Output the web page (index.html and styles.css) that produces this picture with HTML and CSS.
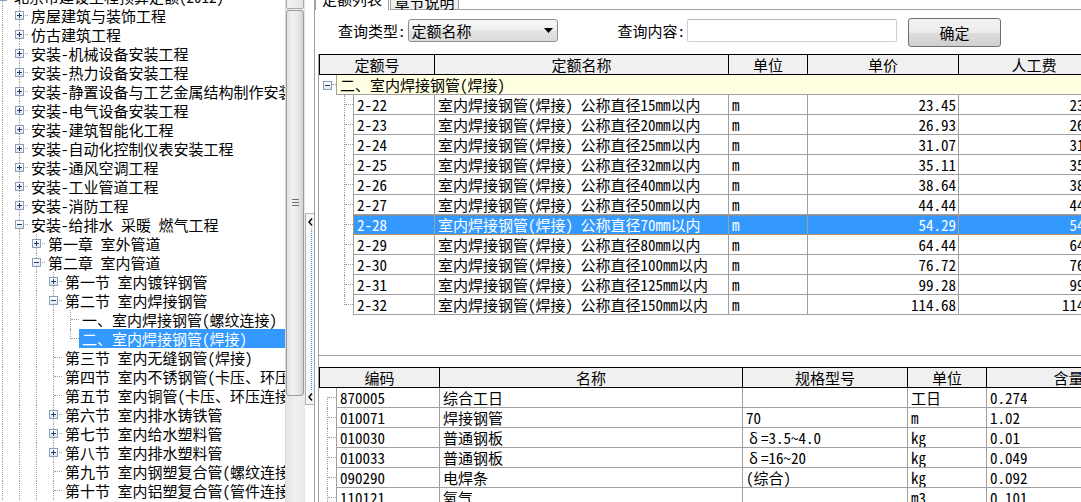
FILE: index.html
```html
<!DOCTYPE html>
<html lang="zh-CN">
<head>
<meta charset="utf-8">
<title>定额列表</title>
<link rel="stylesheet" href="styles.css">
</head>
<body>
<div class="app">
  <div class="left">
    <div class="tree">
      <div class="tree-inner">
        <div class="trow"><span class="c"><span class="box"></span></span><span class="t">北京市建设工程预算定额(2012)</span></div>
        <div class="trow"><span class="g v"></span><span class="c"><span class="box plus"></span></span><span class="t">房屋建筑与装饰工程</span></div>
        <div class="trow"><span class="g v"></span><span class="c"><span class="box plus"></span></span><span class="t">仿古建筑工程</span></div>
        <div class="trow"><span class="g v"></span><span class="c"><span class="box plus"></span></span><span class="t">安装-机械设备安装工程</span></div>
        <div class="trow"><span class="g v"></span><span class="c"><span class="box plus"></span></span><span class="t">安装-热力设备安装工程</span></div>
        <div class="trow"><span class="g v"></span><span class="c"><span class="box plus"></span></span><span class="t">安装-静置设备与工艺金属结构制作安装工程</span></div>
        <div class="trow"><span class="g v"></span><span class="c"><span class="box plus"></span></span><span class="t">安装-电气设备安装工程</span></div>
        <div class="trow"><span class="g v"></span><span class="c"><span class="box plus"></span></span><span class="t">安装-建筑智能化工程</span></div>
        <div class="trow"><span class="g v"></span><span class="c"><span class="box plus"></span></span><span class="t">安装-自动化控制仪表安装工程</span></div>
        <div class="trow"><span class="g v"></span><span class="c"><span class="box plus"></span></span><span class="t">安装-通风空调工程</span></div>
        <div class="trow"><span class="g v"></span><span class="c"><span class="box plus"></span></span><span class="t">安装-工业管道工程</span></div>
        <div class="trow"><span class="g v"></span><span class="c"><span class="box plus"></span></span><span class="t">安装-消防工程</span></div>
        <div class="trow"><span class="g v"></span><span class="c"><span class="box"></span></span><span class="t">安装-给排水 采暖 燃气工程</span></div>
        <div class="trow"><span class="g v"></span><span class="g v"></span><span class="c"><span class="box plus"></span></span><span class="t">第一章 室外管道</span></div>
        <div class="trow"><span class="g v"></span><span class="g v"></span><span class="c"><span class="box"></span></span><span class="t">第二章 室内管道</span></div>
        <div class="trow"><span class="g v"></span><span class="g v"></span><span class="g v"></span><span class="c"><span class="box plus"></span></span><span class="t">第一节 室内镀锌钢管</span></div>
        <div class="trow"><span class="g v"></span><span class="g v"></span><span class="g v"></span><span class="c"><span class="box"></span></span><span class="t">第二节 室内焊接钢管</span></div>
        <div class="trow"><span class="g v"></span><span class="g v"></span><span class="g v"></span><span class="g v"></span><span class="c"></span><span class="t">一、室内焊接钢管(螺纹连接)</span></div>
        <div class="trow"><span class="g v"></span><span class="g v"></span><span class="g v"></span><span class="g v"></span><span class="c last"></span><span class="t sel">二、室内焊接钢管(焊接)</span></div>
        <div class="trow"><span class="g v"></span><span class="g v"></span><span class="g v"></span><span class="c"></span><span class="t">第三节 室内无缝钢管(焊接)</span></div>
        <div class="trow"><span class="g v"></span><span class="g v"></span><span class="g v"></span><span class="c"></span><span class="t">第四节 室内不锈钢管(卡压、环压连接)</span></div>
        <div class="trow"><span class="g v"></span><span class="g v"></span><span class="g v"></span><span class="c"></span><span class="t">第五节 室内铜管(卡压、环压连接)</span></div>
        <div class="trow"><span class="g v"></span><span class="g v"></span><span class="g v"></span><span class="c"><span class="box plus"></span></span><span class="t">第六节 室内排水铸铁管</span></div>
        <div class="trow"><span class="g v"></span><span class="g v"></span><span class="g v"></span><span class="c"><span class="box plus"></span></span><span class="t">第七节 室内给水塑料管</span></div>
        <div class="trow"><span class="g v"></span><span class="g v"></span><span class="g v"></span><span class="c"><span class="box plus"></span></span><span class="t">第八节 室内排水塑料管</span></div>
        <div class="trow"><span class="g v"></span><span class="g v"></span><span class="g v"></span><span class="c"></span><span class="t">第九节 室内钢塑复合管(螺纹连接)</span></div>
        <div class="trow"><span class="g v"></span><span class="g v"></span><span class="g v"></span><span class="c"></span><span class="t">第十节 室内铝塑复合管(管件连接)</span></div>
      </div>
    </div>
    <div class="vscroll">
      <div class="sb-up"></div>
      <div class="sb-thumb"><span class="grip"></span></div>
    </div>
  </div>

  <div class="splitter">
    <div class="split-handle">
      <svg class="chev" width="5" height="8" viewBox="0 0 5 8"><path d="M4 0.5 L1 4 L4 7.5" stroke="#000" stroke-width="1.4" fill="none"/></svg>
      <span class="split-dots"></span>
      <svg class="chev" width="5" height="8" viewBox="0 0 5 8"><path d="M4 0.5 L1 4 L4 7.5" stroke="#000" stroke-width="1.4" fill="none"/></svg>
    </div>
  </div>

  <div class="right">
    <div class="tabs">
      <div class="tab active">定额列表</div>
      <div class="tab">章节说明</div>
      <div class="tab-fill"></div>
    </div>

    <div class="query">
      <span class="qlabel">查询类型:</span>
      <div class="select"><span>定额名称</span><svg width="9" height="5" viewBox="0 0 9 5"><path d="M0 0 H9 L4.5 5 Z" fill="#000"/></svg></div>
      <span class="qlabel ql2">查询内容:</span>
      <div class="input"></div>
      <div class="btn">确定</div>
    </div>

    <div class="grids">
      <div class="upper">
        <div class="hrow">
          <div class="hcell uh-code">定额号</div>
          <div class="hcell u-name">定额名称</div>
          <div class="hcell u-unit">单位</div>
          <div class="hcell u-price">单价</div>
          <div class="hcell u-labor">人工费</div>
        </div>
        <div class="grow">
          <span class="gbox"><span class="box"></span></span>
          <div class="gcell">二、室内焊接钢管(焊接)</div>
        </div>
        <div class="drow"><span class="ind"></span><span class="c"></span><div class="cells"><div class="cell u-code">2-22</div><div class="cell u-name">室内焊接钢管(焊接) 公称直径15mm以内</div><div class="cell u-unit">m</div><div class="cell u-price num">23.45</div><div class="cell u-labor num">23.12</div></div></div>
        <div class="drow"><span class="ind"></span><span class="c"></span><div class="cells"><div class="cell u-code">2-23</div><div class="cell u-name">室内焊接钢管(焊接) 公称直径20mm以内</div><div class="cell u-unit">m</div><div class="cell u-price num">26.93</div><div class="cell u-labor num">26.47</div></div></div>
        <div class="drow"><span class="ind"></span><span class="c"></span><div class="cells"><div class="cell u-code">2-24</div><div class="cell u-name">室内焊接钢管(焊接) 公称直径25mm以内</div><div class="cell u-unit">m</div><div class="cell u-price num">31.07</div><div class="cell u-labor num">31.03</div></div></div>
        <div class="drow"><span class="ind"></span><span class="c"></span><div class="cells"><div class="cell u-code">2-25</div><div class="cell u-name">室内焊接钢管(焊接) 公称直径32mm以内</div><div class="cell u-unit">m</div><div class="cell u-price num">35.11</div><div class="cell u-labor num">35.03</div></div></div>
        <div class="drow"><span class="ind"></span><span class="c"></span><div class="cells"><div class="cell u-code">2-26</div><div class="cell u-name">室内焊接钢管(焊接) 公称直径40mm以内</div><div class="cell u-unit">m</div><div class="cell u-price num">38.64</div><div class="cell u-labor num">38.58</div></div></div>
        <div class="drow"><span class="ind"></span><span class="c"></span><div class="cells"><div class="cell u-code">2-27</div><div class="cell u-name">室内焊接钢管(焊接) 公称直径50mm以内</div><div class="cell u-unit">m</div><div class="cell u-price num">44.44</div><div class="cell u-labor num">44.29</div></div></div>
        <div class="drow"><span class="ind"></span><span class="c"></span><div class="cells selrow"><div class="cell u-code">2-28</div><div class="cell u-name">室内焊接钢管(焊接) 公称直径70mm以内</div><div class="cell u-unit">m</div><div class="cell u-price num">54.29</div><div class="cell u-labor num">54.13</div></div></div>
        <div class="drow"><span class="ind"></span><span class="c"></span><div class="cells"><div class="cell u-code">2-29</div><div class="cell u-name">室内焊接钢管(焊接) 公称直径80mm以内</div><div class="cell u-unit">m</div><div class="cell u-price num">64.44</div><div class="cell u-labor num">64.21</div></div></div>
        <div class="drow"><span class="ind"></span><span class="c"></span><div class="cells"><div class="cell u-code">2-30</div><div class="cell u-name">室内焊接钢管(焊接) 公称直径100mm以内</div><div class="cell u-unit">m</div><div class="cell u-price num">76.72</div><div class="cell u-labor num">76.51</div></div></div>
        <div class="drow"><span class="ind"></span><span class="c"></span><div class="cells"><div class="cell u-code">2-31</div><div class="cell u-name">室内焊接钢管(焊接) 公称直径125mm以内</div><div class="cell u-unit">m</div><div class="cell u-price num">99.28</div><div class="cell u-labor num">99.01</div></div></div>
        <div class="drow"><span class="ind"></span><span class="c last"></span><div class="cells"><div class="cell u-code">2-32</div><div class="cell u-name">室内焊接钢管(焊接) 公称直径150mm以内</div><div class="cell u-unit">m</div><div class="cell u-price num">114.68</div><div class="cell u-labor num">114.35</div></div></div>
      </div>

      <div class="lower">
        <div class="hrow">
          <div class="hcell lh-code">编码</div>
          <div class="hcell l-name">名称</div>
          <div class="hcell l-spec">规格型号</div>
          <div class="hcell l-unit">单位</div>
          <div class="hcell l-qty">含量</div>
        </div>
        <div class="drow"><span class="c first"></span><div class="cells"><div class="cell l-code">870005</div><div class="cell l-name">综合工日</div><div class="cell l-spec"></div><div class="cell l-unit">工日</div><div class="cell l-qty">0.274</div></div></div>
        <div class="drow"><span class="c"></span><div class="cells"><div class="cell l-code">010071</div><div class="cell l-name">焊接钢管</div><div class="cell l-spec">70</div><div class="cell l-unit">m</div><div class="cell l-qty">1.02</div></div></div>
        <div class="drow"><span class="c"></span><div class="cells"><div class="cell l-code">010030</div><div class="cell l-name">普通钢板</div><div class="cell l-spec"><span class="fw">δ</span>=3.5~4.0</div><div class="cell l-unit">kg</div><div class="cell l-qty">0.01</div></div></div>
        <div class="drow"><span class="c"></span><div class="cells"><div class="cell l-code">010033</div><div class="cell l-name">普通钢板</div><div class="cell l-spec"><span class="fw">δ</span>=16~20</div><div class="cell l-unit">kg</div><div class="cell l-qty">0.049</div></div></div>
        <div class="drow"><span class="c"></span><div class="cells"><div class="cell l-code">090290</div><div class="cell l-name">电焊条</div><div class="cell l-spec">(综合)</div><div class="cell l-unit">kg</div><div class="cell l-qty">0.092</div></div></div>
        <div class="drow"><span class="c"></span><div class="cells"><div class="cell l-code">110121</div><div class="cell l-name">氧气</div><div class="cell l-spec"></div><div class="cell l-unit">m3</div><div class="cell l-qty">0.101</div></div></div>
      </div>
    </div>
  </div>
</div>
</body>
</html>
```

FILE: styles.css
```css
* { box-sizing: border-box; }

html, body {
  margin: 0;
  padding: 0;
  background: #fff;
  overflow: hidden;
}

body {
  font-family: "Noto Sans Mono CJK SC", "Noto Sans CJK SC", "DejaVu Sans Mono", monospace;
  font-size: 15px;
  line-height: 19px;
  color: #000;
}

.app {
  display: flex;
  width: 1081px;
  height: 502px;
  overflow: hidden;
}

/* ---------- left tree ---------- */
.left {
  display: flex;
  width: 305px;
  flex: none;
  height: 502px;
}

.tree {
  width: 285px;
  height: 502px;
  overflow: hidden;
  background: #fff;
}

.tree-inner {
  margin-top: -13px;
  margin-left: -6px;
}

.trow {
  display: flex;
  height: 19px;
  white-space: nowrap;
}

.g, .c {
  flex: none;
  width: 17px;
  position: relative;
  display: flex;
  align-items: center;
  justify-content: center;
}

.g.v::before,
.c::before {
  content: "";
  position: absolute;
  left: 8px;
  top: 0;
  bottom: 0;
  border-left: 1px dotted #a0a0a0;
}

.c.last::before { bottom: auto; height: 10px; }
.c.first::before { top: 9px; }

.c::after {
  content: "";
  position: absolute;
  left: 9px;
  right: 0;
  top: 9px;
  border-top: 1px dotted #a0a0a0;
}

.box {
  position: relative;
  z-index: 1;
  width: 9px;
  height: 9px;
  border: 1px solid #8a9fba;
  background: linear-gradient(#ffffff, #e2e6ec);
}

.box::before {
  content: "";
  position: absolute;
  left: 1px;
  top: 3px;
  width: 5px;
  height: 1px;
  background: #1d3b78;
}

.box.plus::after {
  content: "";
  position: absolute;
  left: 3px;
  top: 1px;
  width: 1px;
  height: 5px;
  background: #1d3b78;
}

.t {
  flex: 1 0 auto;
  padding: 0 3px;
}

.t.sel {
  background: #3399ff;
  color: #fff;
}

/* ---------- scrollbar ---------- */
.vscroll {
  width: 20px;
  flex: none;
  height: 502px;
  background: linear-gradient(to right, #e4e4e4, #f0f0f0 50%, #e8e8e8);
  border-left: 1px solid #dadada;
  padding: 0 1px 0 0;
  display: flex;
  flex-direction: column;
}

.sb-up {
  height: 17px;
  margin-top: -8px;
  border: 1px solid #a9a9a9;
  border-radius: 2px;
  background: linear-gradient(to right, #f2f2f2, #e4e4e4);
}

.sb-thumb {
  margin-top: 1px;
  height: 386px;
  border: 1px solid #9b9b9b;
  border-radius: 3px;
  background: linear-gradient(to right, #e2e2e2 0%, #f2f2f2 35%, #e9e9e9 65%, #d3d3d3 100%);
  display: flex;
  align-items: center;
  justify-content: center;
}

.grip {
  width: 7px;
  height: 8px;
  background:
    linear-gradient(#6e6e6e, #6e6e6e) 0 0 / 7px 1px no-repeat,
    linear-gradient(#6e6e6e, #6e6e6e) 0 3px / 7px 1px no-repeat,
    linear-gradient(#6e6e6e, #6e6e6e) 0 6px / 7px 1px no-repeat;
}

/* ---------- splitter ---------- */
.splitter {
  width: 10px;
  flex: none;
  height: 502px;
  background: #fff;
  border-right: 1px solid #a0a0a0;
  display: flex;
  flex-direction: column;
}

.split-handle {
  margin-top: 213px;
  height: 192px;
  width: 9px;
  border: 1px solid #b4b4b4;
  border-right: none;
  background: #f6f6f6;
  display: flex;
  flex-direction: column;
  align-items: center;
  padding: 4px 0 3px;
}

.chev { flex: none; display: block; }

.split-dots {
  flex: 1;
  width: 1px;
  margin: 3px 0 3px 3px;
  border-left: 1px dotted #3399ff;
}

/* ---------- right panel ---------- */
.right {
  flex: 1;
  min-width: 0;
  height: 502px;
  overflow: hidden;
  display: flex;
  flex-direction: column;
}

.tabs {
  height: 10px;
  flex: none;
  display: flex;
  align-items: flex-end;
}

.tab {
  flex: none;
  text-align: center;
  line-height: 19px;
  white-space: nowrap;
  border: 1px solid #a0a0a0;
}

.tab.active {
  width: 74px;
  height: 22px;
  border-bottom: none;
  background: #fff;
}

.tab:not(.active) {
  width: 69px;
  height: 20px;
  margin-left: 1px;
  background: #f0f0f0;
  padding-top: 1px;
}

.tab-fill {
  flex: 1;
  height: 10px;
  border-bottom: 1px solid #a0a0a0;
}

.query {
  height: 44px;
  flex: none;
  display: flex;
  align-items: flex-start;
  padding: 9px 0 0 23px;
}

.qlabel {
  flex: none;
  line-height: 23px;
  height: 23px;
  white-space: nowrap;
}

.ql2 { margin-left: 60px; }

.select {
  flex: none;
  margin-left: 2px;
  width: 150px;
  height: 23px;
  border: 1px solid #8e8e8e;
  border-radius: 3px;
  background: linear-gradient(#f9f9f9, #ececec 50%, #e3e3e3 51%, #dcdcdc);
  display: flex;
  align-items: center;
  justify-content: space-between;
  padding: 0 4px 0 3px;
  line-height: 21px;
}

.input {
  flex: none;
  margin-left: 2px;
  width: 210px;
  height: 23px;
  border: 1px solid #cfcfcf;
  border-top-color: #b5b5b5;
  border-radius: 2px;
  background: #fff;
}

.btn {
  flex: none;
  margin: -1px 0 0 11px;
  width: 93px;
  height: 29px;
  border: 1px solid #707070;
  border-radius: 3px;
  background: linear-gradient(#f3f3f3, #ebebeb 50%, #dddddd 51%, #cfcfcf);
  text-align: center;
  line-height: 27px;
}

/* ---------- grids ---------- */
.grids {
  flex: 1;
  margin-left: 3px;
  border-left: 1px solid #a0a0a0;
}

.upper {
  height: 302px;
  border-bottom: 1px solid #a0a0a0;
  overflow: hidden;
}

.lower {
  margin-top: 11px;
}

.hrow {
  display: flex;
  border-top: 1px solid #000;
  border-bottom: 1px solid #000;
  background: #f0f0f0;
}

.hcell {
  flex: none;
  height: 19px;
  line-height: 19px;
  text-align: center;
  border-right: 1px solid #000;
  white-space: nowrap;
}

.hcell:first-child { border-left: 1px solid #000; }

.grow {
  display: flex;
  height: 20px;
}

.gbox {
  flex: none;
  width: 17px;
  position: relative;
  display: flex;
  align-items: center;
  justify-content: center;
}

.gbox::after {
  content: "";
  position: absolute;
  left: 13px;
  right: 0;
  top: 9px;
  border-top: 1px dotted #a0a0a0;
}

.gcell {
  flex: 1;
  height: 20px;
  border-left: 1px solid #a0a0a0;
  border-bottom: 1px solid #a0a0a0;
  background: #ffffe1;
  padding-left: 3px;
  line-height: 19px;
  white-space: nowrap;
}

.drow {
  display: flex;
  height: 20px;
}

.ind {
  flex: none;
  width: 17px;
}

.drow .c { height: 20px; }

.cells {
  display: flex;
  flex: none;
}

.cell {
  flex: none;
  height: 20px;
  line-height: 19px;
  padding: 0 3px;
  border-right: 1px solid #a0a0a0;
  border-bottom: 1px solid #a0a0a0;
  overflow: hidden;
  white-space: nowrap;
}

.cells .cell:first-child { border-left: 1px solid #a0a0a0; }

.cell.num {
  text-align: right;
  padding-right: 2px;
}

.fw {
  display: inline-block;
  width: 15px;
  text-align: center;
}

.selrow .cell {
  background: #3399ff;
  color: #fff;
}

.selrow {
  outline: 1px dotted #c8843c;
  outline-offset: -1px;
}

/* upper columns */
.uh-code { width: 116px; }
.u-code { width: 82px; }
.u-name { width: 294px; }
.u-unit { width: 79px; }
.u-price { width: 151px; }
.u-labor { width: 151px; }

/* lower columns */
.lh-code { width: 121px; }
.l-code { width: 104px; }
.l-name { width: 303px; }
.l-spec { width: 165px; }
.l-unit { width: 79px; }
.l-qty { width: 164px; }
```
